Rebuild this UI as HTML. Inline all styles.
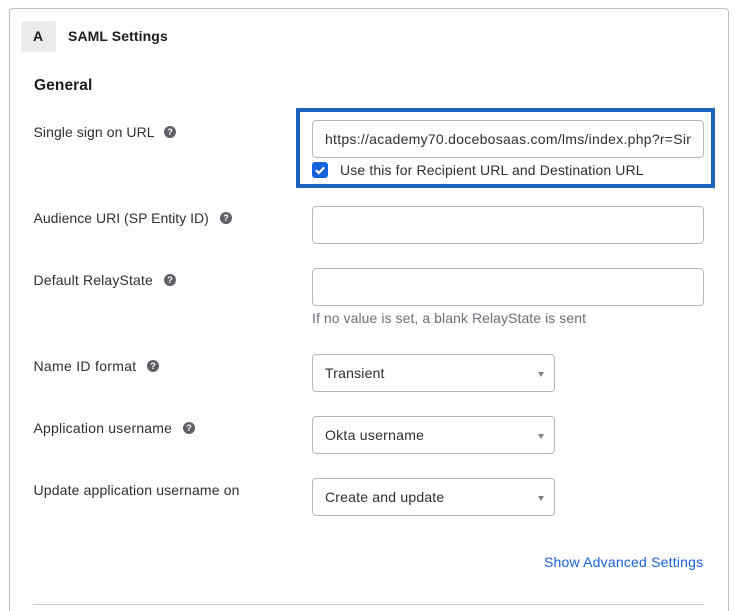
<!DOCTYPE html>
<html>
<head>
<meta charset="utf-8">
<style>
html,body{margin:0;padding:0;background:#fff;width:735px;height:611px;overflow:hidden;}
body{position:relative;font-family:"Liberation Sans",sans-serif;color:#1d1d21;font-size:14px;}
#w{position:absolute;left:0;top:0;width:735px;height:611px;overflow:hidden;}
.a{position:absolute;white-space:nowrap;}
.t{position:absolute;white-space:nowrap;line-height:18px;letter-spacing:.13px;color:#2f2f34;}
.box{position:absolute;box-sizing:border-box;border:1px solid #b8b8bf;border-radius:4px;background:#fff;}
.q{position:absolute;width:12px;height:12px;border-radius:50%;background:#5f5f68;color:#fff;font-size:9px;font-weight:bold;line-height:12px;text-align:center;}
.tri{position:absolute;width:0;height:0;border-left:3.5px solid transparent;border-right:3.5px solid transparent;border-top:5px solid #808085;}
</style>
</head>
<body>
<div id="w">
<div class="a" style="left:9px;top:8px;width:720px;height:603px;box-sizing:border-box;border:1px solid #bfbfc5;border-bottom:0;border-radius:4px 4px 0 0;"></div>
<div class="a" style="left:21px;top:21px;width:35px;height:31px;background:#ebebed;border-radius:3px;"></div>
<div class="t" style="left:33px;top:27px;font-weight:bold;font-size:14px;letter-spacing:0;color:#1d1d21;">A</div>
<div class="t" style="left:68px;top:27px;font-weight:bold;font-size:14px;letter-spacing:.1px;color:#1d1d21;">SAML Settings</div>
<div class="t" style="left:34px;top:77px;font-weight:bold;font-size:15.5px;letter-spacing:.1px;color:#1d1d21;">General</div>

<div class="t" style="left:33.5px;top:123px;letter-spacing:.07px;">Single sign on URL</div>
<div class="q" style="left:164px;top:126px;">?</div>
<div class="t" style="left:33.5px;top:209px;letter-spacing:.02px;">Audience URI (SP Entity ID)</div>
<div class="q" style="left:220px;top:212px;">?</div>
<div class="t" style="left:33.5px;top:271px;letter-spacing:.15px;">Default RelayState</div>
<div class="q" style="left:164px;top:274px;">?</div>
<div class="t" style="left:33.5px;top:357px;letter-spacing:.3px;">Name ID format</div>
<div class="q" style="left:147px;top:360px;">?</div>
<div class="t" style="left:33.5px;top:419px;letter-spacing:.2px;">Application username</div>
<div class="q" style="left:183px;top:422px;">?</div>
<div class="t" style="left:33.5px;top:481px;letter-spacing:.15px;">Update application username on</div>

<div class="a" style="left:296px;top:108px;width:419px;height:80px;box-sizing:border-box;border:4px solid #1f62bd;border-radius:1px;"></div>
<div class="box" style="left:312px;top:120px;width:392px;height:38px;"></div>
<div class="t" style="left:325px;top:130px;letter-spacing:.27px;">https://academy70.docebosaas.com/lms/index.php?r=Sir</div>
<div class="a" style="left:312px;top:162px;width:16px;height:16px;background:#1662dd;border-radius:3px;">
<svg width="16" height="16" viewBox="0 0 16 16" style="display:block"><path d="M3.8 8.2 L6.8 11 L12.2 5.4" fill="none" stroke="#fff" stroke-width="2.2"/></svg>
</div>
<div class="t" style="left:340px;top:161px;letter-spacing:.135px;">Use this for Recipient URL and Destination URL</div>

<div class="box" style="left:312px;top:206px;width:392px;height:38px;"></div>
<div class="box" style="left:312px;top:268px;width:392px;height:38px;"></div>
<div class="t" style="left:312px;top:309px;color:#6e6e78;letter-spacing:.07px;">If no value is set, a blank RelayState is sent</div>

<div class="box" style="left:312px;top:354px;width:243px;height:38px;"></div>
<div class="t" style="left:325px;top:364px;letter-spacing:.2px;">Transient</div>
<div class="tri" style="left:538px;top:372px;"></div>
<div class="box" style="left:312px;top:416px;width:243px;height:38px;"></div>
<div class="t" style="left:325px;top:426px;letter-spacing:.27px;">Okta username</div>
<div class="tri" style="left:538px;top:434px;"></div>
<div class="box" style="left:312px;top:478px;width:243px;height:38px;"></div>
<div class="t" style="left:325px;top:488px;letter-spacing:.2px;">Create and update</div>
<div class="tri" style="left:538px;top:496px;"></div>

<div class="t" style="left:544px;top:553px;color:#1662dd;letter-spacing:.2px;">Show Advanced Settings</div>
<div class="a" style="left:33px;top:604px;width:671px;height:1px;background:#cfcfd3;"></div>
</div>
</body>
</html>
